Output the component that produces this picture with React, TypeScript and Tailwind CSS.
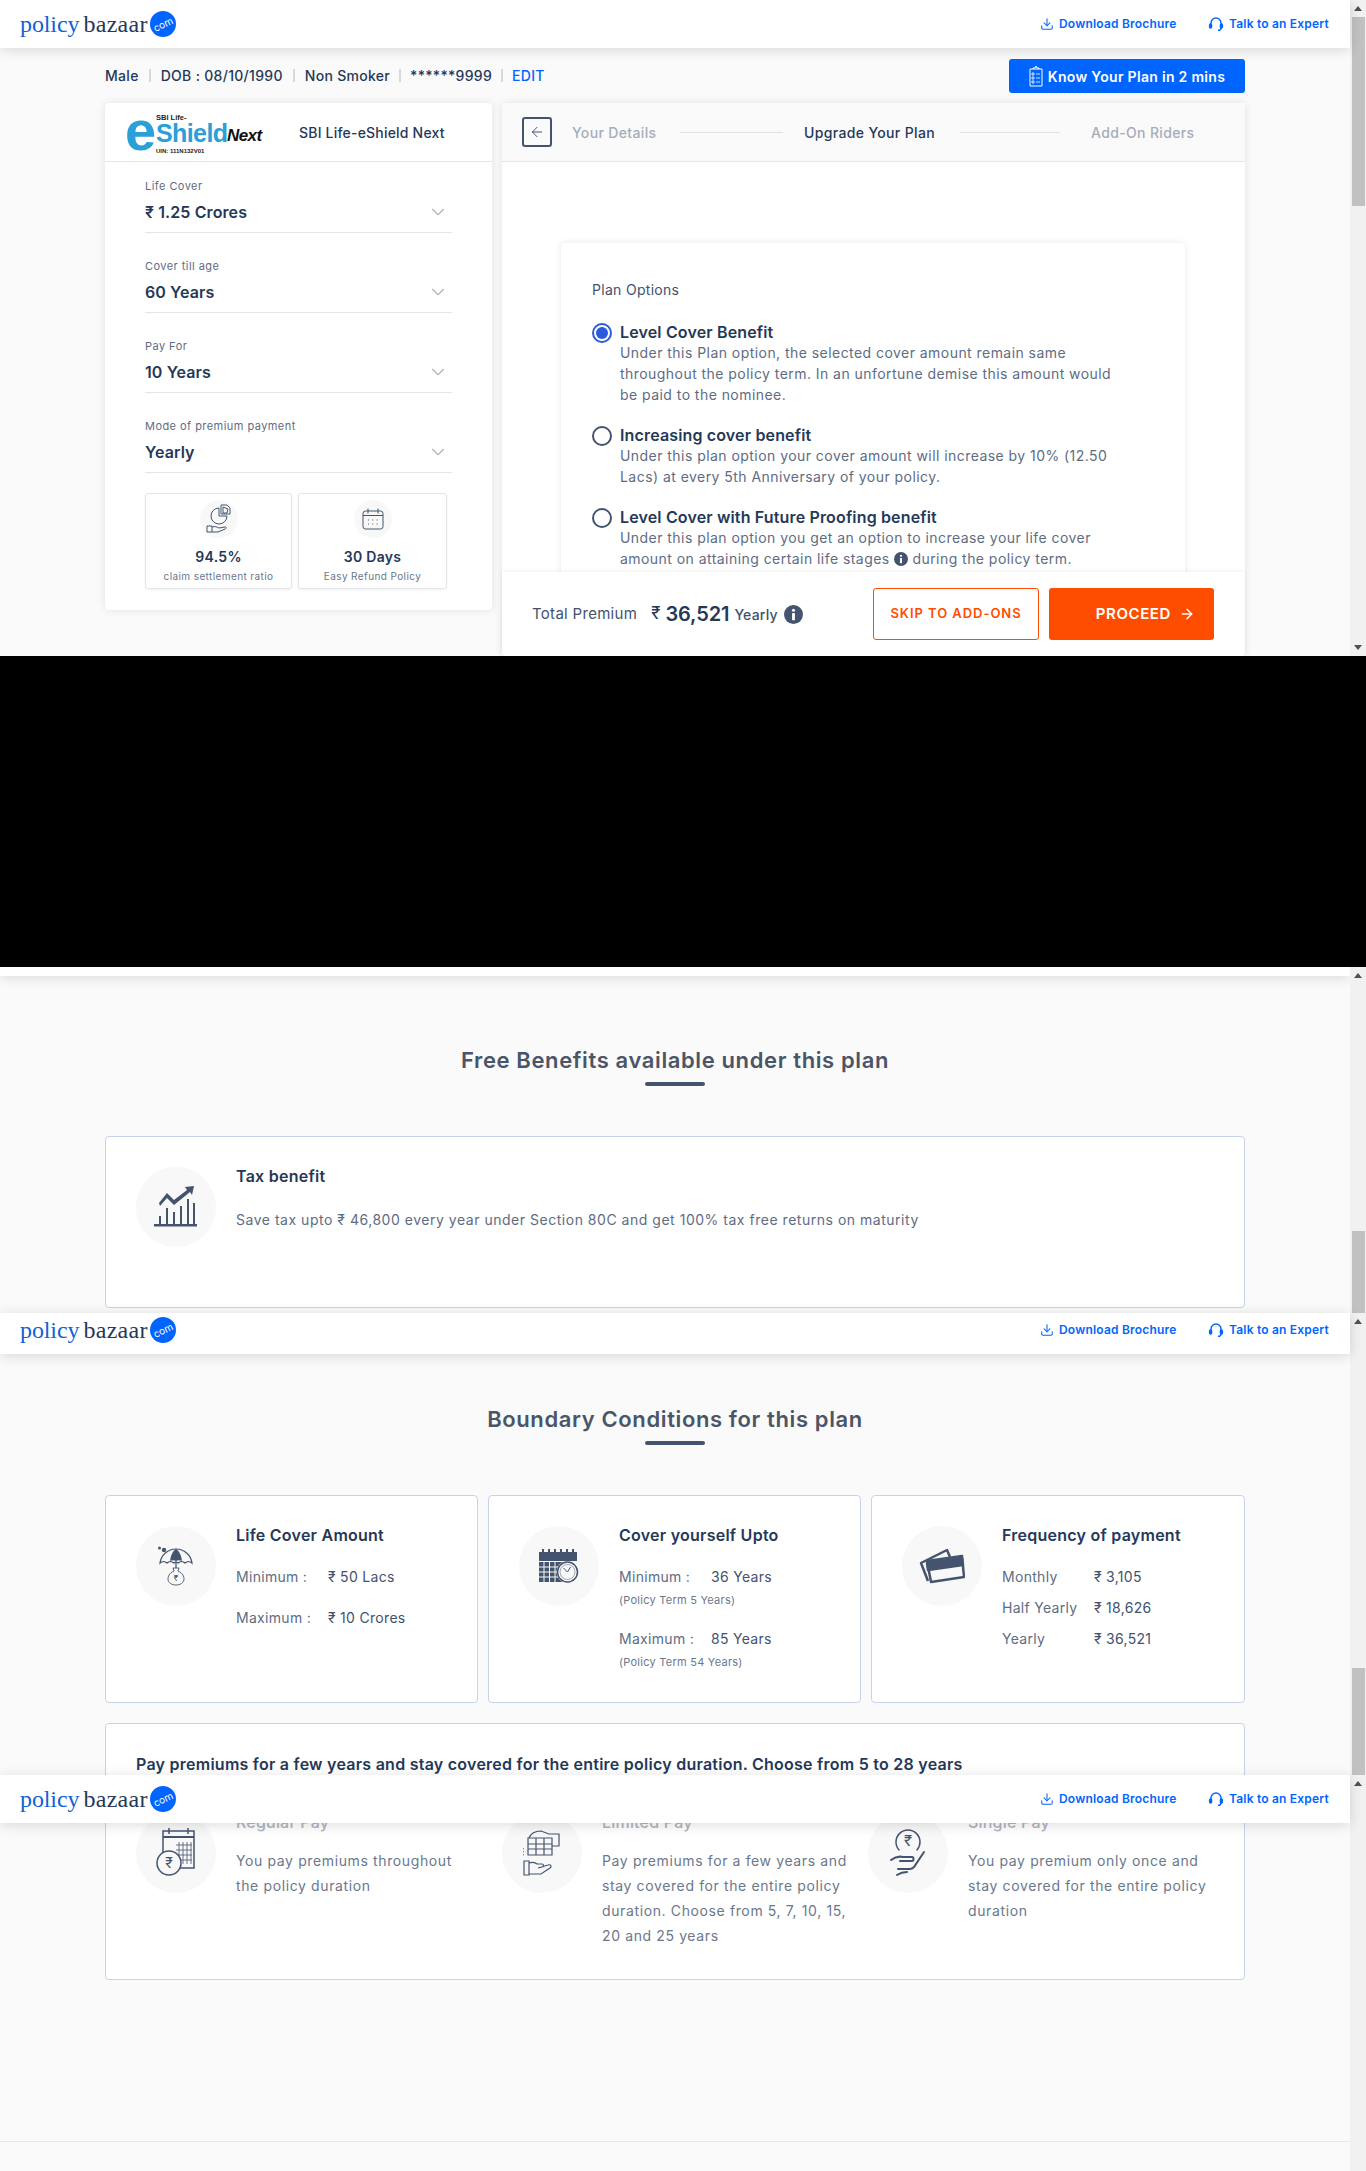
import type { ReactNode } from "react";
import { ChevronDown, ArrowLeft, ArrowRight, Download } from "lucide-react";

const INK = "#44546f";

function Logo() {
  return (
    <div className="flex items-center">
      <span className="font-[family-name:'Liberation_Serif',serif] text-[24px] leading-none text-[#0f62d6] tracking-[-0.1px]">policy</span>
      <span className="ml-[4px] font-[family-name:'Liberation_Serif',serif] text-[24px] leading-none text-[#253858] tracking-[0.3px]">bazaar</span>
      <span className="ml-[2px] flex h-[26px] w-[26px] items-center justify-center rounded-full bg-[#0065ff] text-[10px] text-white">
        <span className="-rotate-[25deg]">com</span>
      </span>
    </div>
  );
}

function HeadsetIcon() {
  return (
    <svg width="16" height="16" viewBox="0 0 16 16" fill="none" stroke="#0065ff" strokeWidth="1.4">
      <path d="M3 9V7a5 5 0 0 1 10 0v2" />
      <rect x="1.6" y="8" width="2" height="4" rx="1" fill="#0065ff" />
      <rect x="12.4" y="8" width="2" height="4" rx="1" fill="#0065ff" />
      <path d="M13 12c0 1.6-1.2 2.4-3 2.4" />
    </svg>
  );
}

function InfoDot({ size, className = "" }: { size: number; className?: string }) {
  return (
    <svg width={size} height={size} viewBox="0 0 20 20" className={className}>
      <circle cx="10" cy="10" r="10" fill={INK} />
      <circle cx="10" cy="5.500" r="1.600" fill="white" />
      <rect x="8.500" y="8.500" width="3" height="7.500" rx="0.500" fill="white" />
    </svg>
  );
}

function Header({ className = "" }: { className?: string }) {
  return (
    <div className={`flex w-[1350px] items-center justify-between bg-white pl-[20px] pr-[21px] shadow-[0_2px_12px_rgba(0,0,0,0.14)] ${className}`}>
      <Logo />
      <div className="flex items-center text-[12px] font-semibold text-[#0065ff]">
        <Download size={14} strokeWidth={1.8} className="mr-[5px]" />
        <span className="w-[120px] whitespace-nowrap tracking-[0.2px]">Download Brochure</span>
        <span className="ml-[29px] mr-[5px]"><HeadsetIcon /></span>
        <span className="w-[100px] whitespace-nowrap tracking-[0.2px]">Talk to an Expert</span>
      </div>
    </div>
  );
}

function UpArrow() {
  return <div className="mx-auto h-0 w-0 border-x-[4px] border-b-[5px] border-x-transparent border-b-[#505050]" />;
}

function DownArrow() {
  return <div className="mx-auto h-0 w-0 border-x-[4px] border-t-[5px] border-x-transparent border-t-[#505050]" />;
}

function Thumb({ className }: { className: string }) {
  return <div className={`ml-[2px] w-[13px] bg-[#c1c1c1] ${className}`} />;
}

function SectionTitle({ children, className = "" }: { children: ReactNode; className?: string }) {
  return (
    <div className={className}>
      <h2 className="text-center text-[22px] font-semibold leading-[30px] text-[#4a5568] tracking-[0.62px]">{children}</h2>
      <div className="mx-auto mt-[7px] h-[4px] w-[60px] rounded-full bg-[#44546f]" />
    </div>
  );
}

function Circle({ size = 80, children }: { size?: number; children: ReactNode }) {
  return (
    <div
      className="flex shrink-0 items-center justify-center rounded-full bg-[#f8f8f8]"
      style={{ width: size, height: size }}
    >
      {children}
    </div>
  );
}

function EShieldLogo() {
  return (
    <svg width="142" height="66" viewBox="0 -10 142 66" className="-my-[10px] ml-[20px] shrink-0">
      <text x="31" y="11" fontFamily="'Liberation Sans',sans-serif" fontSize="7.5" fontWeight="700" fill="#222">SBI Life-</text>
      <text x="0" y="41" fontFamily="'Liberation Sans',sans-serif" fontSize="56" fontWeight="700" fill="#2a9fd8">e</text>
      <text x="31" y="33" fontFamily="'Liberation Sans',sans-serif" fontSize="25" fontWeight="700" fill="#2a9fd8" letterSpacing="-0.6">Shield</text>
      <text x="102" y="32" fontFamily="'Liberation Sans',sans-serif" fontSize="17" fontWeight="700" fontStyle="italic" fill="#111" letterSpacing="-0.6">Next</text>
      <text x="31" y="44" fontFamily="'Liberation Sans',sans-serif" fontSize="6" fontWeight="700" fill="#222">UIN: 111N132V01</text>
    </svg>
  );
}

function SelectField({ label, value }: { label: string; value: ReactNode }) {
  return (
    <div className="mb-[19px] h-[61px] border-b border-[#e3e5e8]">
      <div className="text-[11px] leading-[28px] text-[#5e6c84] tracking-[0.45px]">{label}</div>
      <div className="flex h-[24px] items-center justify-between pr-[3px] text-[16px] font-semibold leading-[24px] text-[#253858] tracking-[0.1px]">
        <span>{value}</span>
        <ChevronDown size={22} strokeWidth={1.2} className="text-[#a9b0bb]" />
      </div>
    </div>
  );
}

function PieHandIcon() {
  return (
    <svg width="26" height="30" viewBox="0 0 26 30" fill="none" stroke={INK} strokeWidth="1">
      <path d="M13 4a8 8 0 1 0 8 8h-8z" />
      <path d="M15 1h6l3 3v6h-9z" />
      <path d="M17 3l5 2-1 4h-4z" />
      <path d="M1 22h5v6H1zM6 23c3-1 5 0 7 1l6-1c2 0 1 2 0 2l-7 3H6" />
    </svg>
  );
}

function CalendarIcon() {
  return (
    <svg width="24" height="24" viewBox="0 0 24 24" fill="none" stroke={INK} strokeWidth="1">
      <rect x="2" y="4" width="20" height="18" rx="2.5" />
      <path d="M7 1.5v5M17 1.5v5M2 8.5h20" />
      <path d="M7 13h1.5M11.3 13h1.5M15.6 13h1.5M7 17h1.5M11.3 17h1.5M15.6 17h1.5" strokeDasharray="1 1" />
    </svg>
  );
}

function GrowthIcon() {
  return (
    <svg width="44" height="42" viewBox="0 0 44 42" fill={INK}>
      <rect x="0" y="38" width="43" height="2.5" />
      <rect x="5" y="30" width="2" height="8" />
      <rect x="12" y="22" width="2" height="16" />
      <rect x="19" y="26" width="2" height="12" />
      <rect x="26" y="20" width="2" height="18" />
      <rect x="33" y="13" width="2" height="25" />
      <rect x="39" y="17" width="2" height="21" />
      <path d="M5 17l8-10 7 7 13-10-2-3 9-1-2 9-2-3-16 13-7-7-7 8z" />
    </svg>
  );
}

function UmbrellaIcon() {
  return (
    <svg width="36" height="42" viewBox="0 0 36 42">
      <path d="M2 18C3 10 10 4 18 4s15 6 16 14c-2-2-5-2-7 0-2-2-5-2-7 0-1-1-3-1-4 0-2-2-5-2-7 0-2-2-5-2-7 0z" fill="none" stroke={INK} strokeWidth="1.2" />
      <path d="M12 16C13 9 15 6 18 4c3 2 5 5 6 12-2-1-4-1-6 0-2-1-4-1-6 0z" fill={INK} />
      <circle cx="1.5" cy="3" r="1.5" fill={INK} />
      <circle cx="6" cy="5" r="2.2" fill={INK} />
      <path d="M18 16v7" stroke={INK} strokeWidth="1.2" />
      <path d="M15 23h6l-1 3c5 2 6 6 6 8 0 4-4 6-8 6s-8-2-8-6c0-2 1-6 6-8z" fill="none" stroke={INK} strokeWidth="0.9" />
      <text x="18" y="36" textAnchor="middle" fontSize="8" fill={INK}>₹</text>
    </svg>
  );
}

function CalendarClockIcon() {
  return (
    <svg width="42" height="36" viewBox="0 0 42 36" fill={INK}>
      <path d="M1 4h38v9H1z" />
      <path d="M4 1h2v6H4zM10 1h2v6h-2zM16 1h2v6h-2zM22 1h2v6h-2zM28 1h2v6h-2zM34 1h2v6h-2z" />
      <path d="M1 14h24v20H1z" />
      <path d="M6 14v20M11.500 14v20M17 14v20M1 19h24M1 24h24M1 29h24" stroke="#f8f8f8" strokeWidth="1" />
      <circle cx="29.500" cy="24" r="11" fill="#f8f8f8" />
      <circle cx="29.500" cy="24" r="10" fill="none" stroke={INK} strokeWidth="1.500" />
      <circle cx="29.500" cy="24" r="7.500" fill="none" stroke={INK} strokeWidth="0.500" />
      <path d="M25.500 20l4 4 3-5" fill="none" stroke={INK} strokeWidth="1" />
    </svg>
  );
}

function CardsIcon() {
  return (
    <svg width="46" height="36" viewBox="0 0 46 36" fill="none" stroke={INK} strokeWidth="2.500" strokeLinejoin="round">
      <path d="M9 33L2 15 28 2l3 7" />
      <path d="M8 13l35-5 2 21-33 5z" fill="#f8f8f8" />
      <path d="M8 15l35-5 1 7-35 5z" fill={INK} />
    </svg>
  );
}

function RegularPayIcon() {
  return (
    <svg width="40" height="50" viewBox="0 0 40 50" fill="none" stroke={INK} strokeWidth="1.500">
      <rect x="7" y="3" width="31" height="37" />
      <path d="M7 9h31" strokeWidth="2" />
      <path d="M13 0v6M32 0v6" />
      <path d="M20 17h16M20 22h16M20 27h16M20 32h16M23 14v22M27 14v22M31 14v22M35 14v22" strokeWidth="0.800" />
      <circle cx="13" cy="35" r="12" fill="#f8f8f8" />
      <text x="13" y="40" textAnchor="middle" fontSize="14" fill={INK} stroke="none">₹</text>
    </svg>
  );
}

function LimitedPayIcon() {
  return (
    <svg width="38" height="50" viewBox="0 0 38 50" fill="none" stroke={INK} strokeWidth="1.200">
      <path d="M6 10c2-5 6-7 12-7l8 3h10v12h-7" />
      <path d="M5 10h24v17H5zM5 16h24M5 21h24M13 10v17M21 10v17" />
      <path d="M0 20v8" strokeDasharray="1.500 1.500" />
      <path d="M1 33h5v14H1zM6 35c3-1 6-1 8 1h5c2 0 2 3 0 3l-4 1 10-3c3-1 4 2 2 3l-9 6H6" />
    </svg>
  );
}

function SinglePayIcon() {
  return (
    <svg width="36" height="50" viewBox="0 0 36 50" fill="none" stroke={INK} strokeWidth="1.500" strokeLinecap="round">
      <path d="M9 22a12 12 0 1 1 18 0" />
      <text x="18" y="18" textAnchor="middle" fontSize="15" fill={INK} stroke="none">₹</text>
      <path d="M34 24L24 39c-1 1-2 2-4 2H8" strokeWidth="2" />
      <path d="M1 32c4-3 8-4 12-3h9c2 0 2 4 0 4H10" strokeWidth="2" />
      <path d="M7 47c3-2 6-3 10-3" strokeWidth="2" />
    </svg>
  );
}

function ClipboardIcon() {
  return (
    <svg width="14" height="22" viewBox="0 0 14 22" fill="none" stroke="white" strokeWidth="1">
      <path d="M1 4h12v17H1z" />
      <path d="M4 4V3h2l1-2 1 2h2v1" />
      <path d="M3 8h2v2H3zM3 12h2v2H3zM3 16h2v2H3zM7 9h4M7 13h4M7 17h4" strokeWidth="0.800" />
    </svg>
  );
}

function PlanOption({ title, checked, children }: { title: string; checked?: boolean; children: ReactNode }) {
  return (
    <div className="mb-[20px] flex">
      <div className={`mt-[1px] flex h-[20px] w-[20px] shrink-0 items-center justify-center rounded-full border-2 ${checked ? "border-[#2a5bdc]" : "border-[#44546f]"}`}>
        {checked && <div className="h-[12px] w-[12px] rounded-full bg-[#2a5bdc]" />}
      </div>
      <div className="ml-[8px] whitespace-nowrap">
        <div className="text-[16px] font-semibold leading-[20px] text-[#253858] tracking-[0.15px]">{title}</div>
        <div className="text-[14px] leading-[21px] text-[#5e6c84] tracking-[0.45px]">{children}</div>
      </div>
    </div>
  );
}

function StatBox({ icon, value, label, width }: { icon: ReactNode; value: string; label: string; width: string }) {
  return (
    <div className={`${width} flex h-[96px] flex-col items-center rounded-[3px] border border-[#e3e5e8] pt-[6px] shadow-[0_1px_3px_rgba(0,0,0,0.06)]`}>
      <Circle size={38}>{icon}</Circle>
      <div className="mt-[9px] text-[14px] font-semibold leading-[20px] text-[#253858] tracking-[0.3px]">{value}</div>
      <div className="text-[10px] leading-[18px] text-[#6b778c] tracking-[0.4px]">{label}</div>
    </div>
  );
}

function InfoCard({ icon, title, className = "", children }: { icon: ReactNode; title: string; className?: string; children: ReactNode }) {
  return (
    <div className={`flex rounded-[4px] border border-[#c6d3ea] bg-white pl-[30px] pt-[30px] ${className}`}>
      <Circle>{icon}</Circle>
      <div className="ml-[20px] min-w-0">
        <div className="text-[16px] font-semibold leading-[18px] text-[#253858] tracking-[0.25px]">{title}</div>
        {children}
      </div>
    </div>
  );
}

function Row({ label, value, sub, className = "" }: { label: string; value: string; sub?: string; className?: string }) {
  return (
    <div className={className}>
      <div className="flex text-[14px] leading-[21px] tracking-[0.3px]">
        <span className="w-[92px] text-[#5e6c84]">{label}</span>
        <span className="text-[#42526e]">{value}</span>
      </div>
      {sub && <div className="mt-[4px] text-[11px] leading-[18px] text-[#6b778c] tracking-[0.25px]">{sub}</div>}
    </div>
  );
}

function PayColumn({ icon, title, children }: { icon: ReactNode; title: string; children: ReactNode }) {
  return (
    <div className="flex w-[366px]">
      <Circle>{icon}</Circle>
      <div className="ml-[20px] whitespace-nowrap">
        <div className="text-[16px] font-medium leading-[18px] text-[#b0b5bd] tracking-[0.2px]">{title}</div>
        <div className="mt-[17px] text-[14px] leading-[25px] text-[#6b778c] tracking-[0.62px]">{children}</div>
      </div>
    </div>
  );
}

export default function App() {
  return (
    <div className="h-[2171px] w-[1366px] overflow-hidden bg-[#fafafa] font-[family-name:Inter,sans-serif]">
      {/* top of the page */}
      <div className="flex h-[656px]">
        <div className="w-[1350px]">
          <Header className="relative z-10 h-[48px]" />
          <div className="ml-[105px] w-[1140px]">
            <div className="mt-[11px] flex h-[34px] items-center justify-between">
              <div className="mb-[2px] flex items-center text-[14px] font-medium text-[#253858] tracking-[0.3px]">
                <span>Male</span>
                <span className="mx-[10px] h-[13px] w-[2px] bg-[#d5d8dd]" />
                <span>DOB : 08/10/1990</span>
                <span className="mx-[10px] h-[13px] w-[2px] bg-[#d5d8dd]" />
                <span>Non Smoker</span>
                <span className="mx-[9px] h-[13px] w-[2px] bg-[#d5d8dd]" />
                <span>******9999</span>
                <span className="mx-[9px] h-[13px] w-[2px] bg-[#d5d8dd]" />
                <span className="text-[#0065ff]">EDIT</span>
              </div>
              <button className="flex h-[34px] w-[236px] items-center justify-center gap-[5px] rounded-[3px] bg-[#0065ff] text-[14px] font-semibold text-white tracking-[0.3px]">
                <ClipboardIcon />
                Know Your Plan in 2 mins
              </button>
            </div>
            <div className="mt-[10px] flex items-start gap-[10px]">
              {/* plan summary */}
              <div className="h-[507px] w-[387px] rounded-[4px] bg-white shadow-[0_0_8px_rgba(0,0,0,0.1)]">
                <div className="flex h-[59px] items-center border-b border-[#e3e5e8]">
                  <EShieldLogo />
                  <span className="ml-[32px] whitespace-nowrap text-[14px] font-medium text-[#253858] tracking-[0.2px]">SBI Life-eShield Next</span>
                </div>
                <div className="px-[40px] pt-[10px]">
                  <SelectField label="Life Cover" value="₹ 1.25 Crores" />
                  <SelectField label="Cover till age" value="60 Years" />
                  <SelectField label="Pay For" value="10 Years" />
                  <SelectField label="Mode of premium payment" value="Yearly" />
                  <div className="mt-[20px] flex gap-[6px]">
                    <StatBox icon={<PieHandIcon />} value="94.5%" label="claim settlement ratio" width="w-[147px]" />
                    <StatBox icon={<CalendarIcon />} value="30 Days" label="Easy Refund Policy" width="w-[149px]" />
                  </div>
                </div>
              </div>

              {/* upgrade plan */}
              <div className="flex h-[553px] w-[743px] flex-col rounded-[4px] bg-white shadow-[0_0_8px_rgba(0,0,0,0.1)]">
                <div className="flex h-[59px] shrink-0 items-center whitespace-nowrap border-b border-[#e3e5e8] bg-[#fafafa] pl-[20px] text-[14px] font-medium tracking-[0.35px]">
                  <div className="flex h-[30px] w-[30px] items-center justify-center rounded-[3px] border-2 border-[#44546f]">
                    <ArrowLeft size={16} strokeWidth={1.5} className="text-[#44546f]" />
                  </div>
                  <span className="ml-[20px] w-[84px] text-[#a5adba]">Your Details</span>
                  <span className="ml-[24px] h-px w-[103px] bg-[#dfe1e6]" />
                  <span className="ml-[21px] w-[132px] text-[#253858]">Upgrade Your Plan</span>
                  <span className="ml-[24px] h-px w-[100px] bg-[#dfe1e6]" />
                  <span className="ml-[31px] text-[#a5adba]">Add-On Riders</span>
                </div>
                <div className="min-h-0 flex-1 overflow-hidden px-[59px] pt-[81px]">
                  <div className="h-[400px] w-[624px] rounded-[4px] bg-white pl-[31px] pt-[36px] shadow-[0_0_6px_rgba(0,0,0,0.1)]">
                    <div className="mb-[21px] text-[14px] leading-[22px] text-[#42526e] tracking-[0.3px]">Plan Options</div>
                    <PlanOption title="Level Cover Benefit" checked>
                      Under this Plan option, the selected cover amount remain same<br />
                      throughout the policy term. In an unfortune demise this amount would<br />
                      be paid to the nominee.
                    </PlanOption>
                    <PlanOption title="Increasing cover benefit">
                      Under this plan option your cover amount will increase by 10% (12.50<br />
                      Lacs) at every 5th Anniversary of your policy.
                    </PlanOption>
                    <PlanOption title="Level Cover with Future Proofing benefit">
                      Under this plan option you get an option to increase your life cover<br />
                      amount on attaining certain life stages{" "}
                      <InfoDot size={14} className="inline align-[-2px]" /> during the policy term.
                    </PlanOption>
                  </div>
                </div>
                <div className="relative flex h-[84px] shrink-0 items-center whitespace-nowrap rounded-b-[4px] bg-white pl-[30px] shadow-[0_-1px_4px_rgba(0,0,0,0.06)]">
                  <span className="text-[15px] text-[#42526e] tracking-[0.3px]">Total Premium</span>
                  <span className="ml-[14px] text-[17px] text-[#253858]">₹</span>
                  <span className="ml-[5px] text-[20px] font-semibold text-[#253858] tracking-[-0.1px]">36,521</span>
                  <span className="ml-[5px] text-[14px] font-medium text-[#42526e] tracking-[0.2px]">Yearly</span>
                  <InfoDot size={19} className="ml-[6px]" />
                  <button className="absolute left-[371px] h-[52px] w-[166px] rounded-[3px] border border-[#ff4d00] text-[13px] font-semibold text-[#ff4d00] tracking-[0.95px]">SKIP TO ADD-ONS</button>
                  <button className="absolute left-[547px] flex h-[52px] w-[165px] items-center justify-end gap-[8px] rounded-[3px] bg-[#ff4d00] pr-[19px] text-[15px] font-semibold text-white tracking-[0.6px]">
                    PROCEED
                    <ArrowRight size={16} />
                  </button>
                </div>
              </div>
            </div>
          </div>
        </div>
        <div className="flex w-[16px] flex-col bg-[#f1f1f1]">
          <div className="flex h-[17px] items-center"><UpArrow /></div>
          <Thumb className="h-[189px]" />
          <div className="mt-auto flex h-[17px] items-center"><DownArrow /></div>
        </div>
      </div>

      <div className="h-[311px] bg-black" />

      {/* free benefits */}
      <div className="flex h-[346px]">
        <div className="w-[1350px] overflow-hidden">
          <div className="h-[9px] bg-white shadow-[0_2px_12px_rgba(0,0,0,0.14)]" />
          <SectionTitle className="mt-[69px]">Free Benefits available under this plan</SectionTitle>
          <InfoCard icon={<GrowthIcon />} title="Tax benefit" className="ml-[105px] mt-[50px] h-[172px] w-[1140px]">
            <div className="mt-[24px] whitespace-nowrap text-[14px] leading-[21px] text-[#5e6c84] tracking-[0.52px]">
              Save tax upto ₹ 46,800 every year under Section 80C and get 100% tax free returns on maturity
            </div>
          </InfoCard>
        </div>
        <div className="flex w-[16px] flex-col bg-[#f1f1f1]">
          <div className="flex h-[17px] items-center"><UpArrow /></div>
          <Thumb className="mt-auto h-[82px]" />
        </div>
      </div>

      {/* boundary conditions and pay options */}
      <div className="flex h-[858px]">
        <div className="relative w-[1350px]">
          <Header className="relative z-10 h-[41px] pb-[7px]" />
          <SectionTitle className="mt-[50px]">Boundary Conditions for this plan</SectionTitle>
          <div className="ml-[105px] mt-[50px] flex w-[1140px] gap-[10px]">
            <InfoCard icon={<UmbrellaIcon />} title="Life Cover Amount" className="h-[208px] w-[373px]">
              <Row label="Minimum :" value="₹ 50 Lacs" className="mt-[22px]" />
              <Row label="Maximum :" value="₹ 10 Crores" className="mt-[20px]" />
            </InfoCard>
            <InfoCard icon={<CalendarClockIcon />} title="Cover yourself Upto" className="h-[208px] w-[373px]">
              <Row label="Minimum :" value="36 Years" sub="(Policy Term 5 Years)" className="mt-[22px]" />
              <Row label="Maximum :" value="85 Years" sub="(Policy Term 54 Years)" className="mt-[19px]" />
            </InfoCard>
            <InfoCard icon={<CardsIcon />} title="Frequency of payment" className="h-[208px] w-[374px]">
              <Row label="Monthly" value="₹ 3,105" className="mt-[22px]" />
              <Row label="Half Yearly" value="₹ 18,626" className="mt-[10px]" />
              <Row label="Yearly" value="₹ 36,521" className="mt-[10px]" />
            </InfoCard>
          </div>

          <div className="ml-[105px] mt-[20px] h-[257px] w-[1140px] rounded-[4px] border border-[#c6d3ea] bg-white pl-[30px] pt-[28px]">
            <div className="whitespace-nowrap text-[16px] font-semibold leading-[24px] text-[#253858] tracking-[0.25px]">
              Pay premiums for a few years and stay covered for the entire policy duration. Choose from 5 to 28 years
            </div>
            <div className="mt-[37px] flex">
              <PayColumn icon={<RegularPayIcon />} title="Regular Pay">
                You pay premiums throughout<br />
                the policy duration
              </PayColumn>
              <PayColumn icon={<LimitedPayIcon />} title="Limited Pay">
                Pay premiums for a few years and<br />
                stay covered for the entire policy<br />
                duration. Choose from 5, 7, 10, 15,<br />
                20 and 25 years
              </PayColumn>
              <PayColumn icon={<SinglePayIcon />} title="Single Pay">
                You pay premium only once and<br />
                stay covered for the entire policy<br />
                duration
              </PayColumn>
            </div>
          </div>

          <div className="mt-[161px] border-t border-[#e5e7eb]" />

          {/* sticky header lying over the card */}
          <Header className="absolute left-0 top-[462px] z-10 h-[48px]" />
        </div>
        <div className="flex w-[16px] flex-col bg-[#f1f1f1]">
          <div className="flex h-[17px] items-center"><UpArrow /></div>
          <Thumb className="mt-[338px] h-[107px]" />
          <div className="flex h-[17px] items-center"><UpArrow /></div>
        </div>
      </div>
    </div>
  );
}
